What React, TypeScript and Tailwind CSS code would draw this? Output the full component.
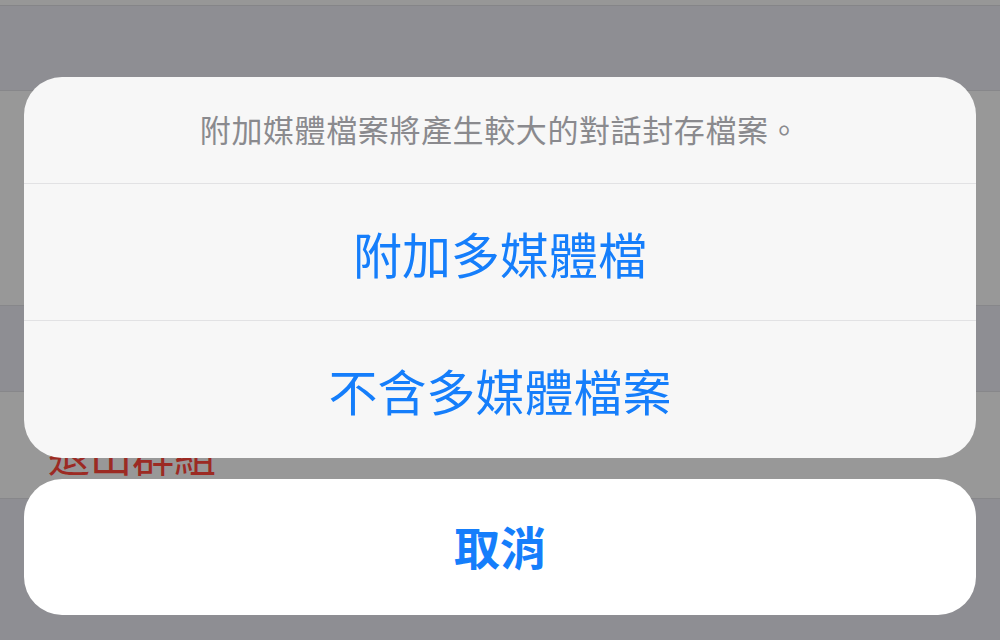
import React from 'react';

const font = { fontFamily: '"Noto Sans CJK TC", "Noto Sans CJK SC", "Noto Sans", sans-serif' };

function Backdrop() {
  return (
    <div className="flex flex-col h-[640px]">
      <div className="h-[6px] bg-[#979797] border-b border-[#858588]" />
      <div className="h-[84px] bg-[#8e8e93]" />
      <div className="h-[216px] bg-[#989898] border-t border-[#87878a] border-b" />
      <div className="h-[85px] bg-[#8e8e93]" />
      <div className="h-[108px] bg-[#989898] border-t border-[#87878a] border-b pl-[48px] pt-[41px]">
        <span className="text-[42px] leading-none text-[#9c2a23]">退出群組</span>
      </div>
      <div className="flex-1 bg-[#8e8e93]" />
    </div>
  );
}

function SheetButton({ label, bold }: { label: string; bold?: boolean }) {
  return (
    <button
      className={`w-full flex items-center justify-center text-[#157efb] leading-none ${bold ? 'font-bold text-[46px] pb-[4px]' : 'text-[49px]'}`}
    >
      {label}
    </button>
  );
}

export default function App() {
  return (
    <div className="relative w-[1000px] h-[640px] overflow-hidden select-none" style={font}>
      <Backdrop />

      {/* action sheet */}
      <div className="absolute inset-0 flex flex-col gap-[21px] px-[24px] pt-[77px]">
        <div className="rounded-[38px] bg-[#f7f7f7] overflow-hidden flex flex-col">
          <div className="h-[106px] flex items-center justify-center text-[31px] tracking-[0.6px] text-[#8a8a8e] pb-[2px]">
            附加媒體檔案將產生較大的對話封存檔案。
          </div>
          <div className="h-px bg-[#e2e2e4]" />
          <div className="h-[136px] flex">
            <SheetButton label="附加多媒體檔" />
          </div>
          <div className="h-px bg-[#e2e2e4]" />
          <div className="h-[137px] flex">
            <SheetButton label="不含多媒體檔案" />
          </div>
        </div>

        <div className="h-[136px] rounded-[38px] bg-white flex">
          <SheetButton label="取消" bold />
        </div>
      </div>
    </div>
  );
}
